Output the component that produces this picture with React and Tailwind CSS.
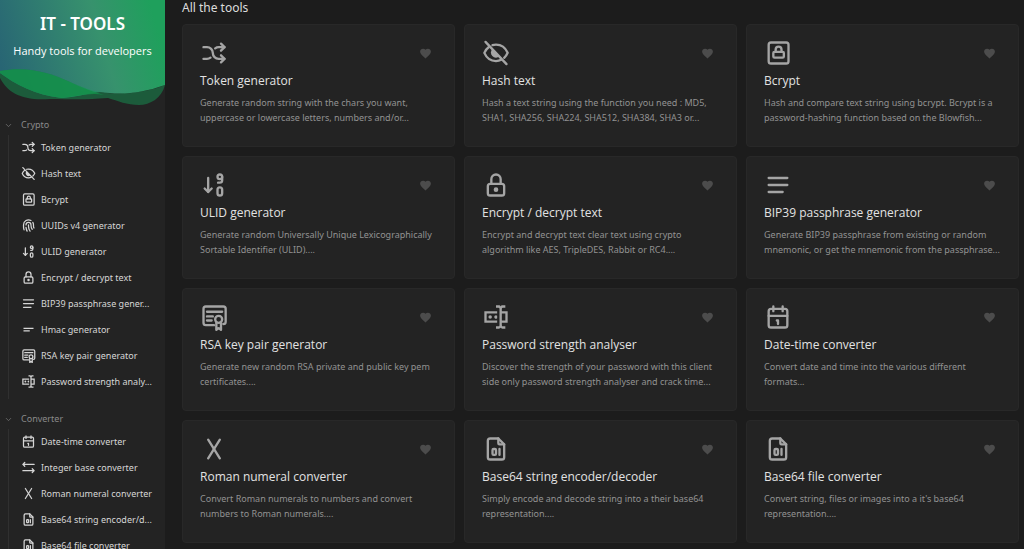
import { ChevronDownIcon } from "lucide-react";
import {
  TbArrowsShuffle,
  TbFileDigit,
  TbFingerprint,
  TbLetterX,
  TbLock,
  TbSortDescendingNumbers,
} from "react-icons/tb";
import { MdFavorite, MdShortText } from "react-icons/md";

function Stroke({ className, children }) {
  return (
    <svg
      viewBox="0 0 24 24"
      className={className}
      fill="none"
      stroke="currentColor"
      strokeWidth="2"
      strokeLinecap="round"
      strokeLinejoin="round"
      aria-hidden
    >
      {children}
    </svg>
  );
}

function EyeOffIcon({ className }) {
  return (
    <Stroke className={className}>
      <path d="M3 2.5l18 19" />
      <path d="M9 5.200c1-.3 2-.4 3-.4 4.800 0 8.200 2.900 10 7-.7 1.700-1.700 3.100-3 4.300M16.500 17.800c-1.300.7-2.800 1.100-4.500 1.100-4.800 0-8.200-2.900-10-7 .9-2 2.100-3.700 3.900-5" />
      <path d="M9 8.500a3.800 3.800 0 0 0 6 6.300z" fill="currentColor" stroke="none" />
    </Stroke>
  );
}

function LockSquareIcon({ className }) {
  return (
    <Stroke className={className}>
      <rect x="4" y="3" width="17" height="18" rx="2" />
      <rect x="8" y="11" width="9" height="5" rx="1" />
      <path d="M10 11V9a2.500 2.500 0 0 1 5 0v2" />
    </Stroke>
  );
}

function LinesIcon({ className }) {
  return (
    <Stroke className={className}>
      <path d="M4 6h16M4 12h16M4 18h12" />
    </Stroke>
  );
}

function CertificateIcon({ className }) {
  return (
    <Stroke className={className}>
      <path d="M12 19H5a2 2 0 0 1-2-2V5a2 2 0 0 1 2-2h15a2 2 0 0 1 2 2v11a2 2 0 0 1-2 2" />
      <path d="M6 7.500h13M6 11.500h5M6 15h4" />
      <circle cx="16" cy="14" r="3" />
      <path d="M14 17v6l2-1.500 2 1.500v-6" />
    </Stroke>
  );
}

function PasswordIcon({ className }) {
  return (
    <svg viewBox="0 0 24 24" className={className} fill="currentColor" aria-hidden>
      <path d="M17 7h5v10h-5v2a1 1 0 0 0 1 1h2v2h-2.500c-.55 0-1.500-.45-1.500-1 0 .55-.95 1-1.500 1H12v-2h2a1 1 0 0 0 1-1V5a1 1 0 0 0-1-1h-2V2h2.500c.55 0 1.500.45 1.500 1 0-.55.95-1 1.500-1H20v2h-2a1 1 0 0 0-1 1v2M2 7h11v2H4v6h9v2H2V7m18 8V9h-3v6h3M8.500 12a1.500 1.500 0 1 0-3 0 1.500 1.500 0 0 0 3 0M13 10.890a1.500 1.500 0 1 0 0 2.220v-2.220z" />
    </svg>
  );
}

function CalendarIcon({ className }) {
  return (
    <Stroke className={className}>
      <rect x="4" y="5" width="16" height="16" rx="2" />
      <path d="M16 3v4M8 3v4M4 11h16M11 15h1v3" />
    </Stroke>
  );
}

function SwapIcon({ className }) {
  return (
    <Stroke className={className}>
      <path d="M21 17H3M18 14l3 3-3 3M21 7H3M6 4L3 7l3 3" />
    </Stroke>
  );
}

const menu = [
  {
    label: "Crypto",
    items: [
      { name: "Token generator", icon: TbArrowsShuffle },
      { name: "Hash text", icon: EyeOffIcon },
      { name: "Bcrypt", icon: LockSquareIcon },
      { name: "UUIDs v4 generator", icon: TbFingerprint },
      { name: "ULID generator", icon: TbSortDescendingNumbers },
      { name: "Encrypt / decrypt text", icon: TbLock },
      { name: "BIP39 passphrase gener...", icon: LinesIcon },
      { name: "Hmac generator", icon: MdShortText },
      { name: "RSA key pair generator", icon: CertificateIcon },
      { name: "Password strength analy...", icon: PasswordIcon },
    ],
  },
  {
    label: "Converter",
    items: [
      { name: "Date-time converter", icon: CalendarIcon },
      { name: "Integer base converter", icon: SwapIcon },
      { name: "Roman numeral converter", icon: TbLetterX },
      { name: "Base64 string encoder/d...", icon: TbFileDigit },
      { name: "Base64 file converter", icon: TbFileDigit },
    ],
  },
];

const tools = [
  {
    name: "Token generator",
    icon: TbArrowsShuffle,
    lines: ["Generate random string with the chars you want,", "uppercase or lowercase letters, numbers and/or..."],
  },
  {
    name: "Hash text",
    icon: EyeOffIcon,
    lines: ["Hash a text string using the function you need : MD5,", "SHA1, SHA256, SHA224, SHA512, SHA384, SHA3 or..."],
  },
  {
    name: "Bcrypt",
    icon: LockSquareIcon,
    lines: ["Hash and compare text string using bcrypt. Bcrypt is a", "password-hashing function based on the Blowfish..."],
  },
  {
    name: "ULID generator",
    icon: TbSortDescendingNumbers,
    lines: ["Generate random Universally Unique Lexicographically", "Sortable Identifier (ULID)...."],
  },
  {
    name: "Encrypt / decrypt text",
    icon: TbLock,
    lines: ["Encrypt and decrypt text clear text using crypto", "algorithm like AES, TripleDES, Rabbit or RC4...."],
  },
  {
    name: "BIP39 passphrase generator",
    icon: LinesIcon,
    lines: ["Generate BIP39 passphrase from existing or random", "mnemonic, or get the mnemonic from the passphrase..."],
  },
  {
    name: "RSA key pair generator",
    icon: CertificateIcon,
    lines: ["Generate new random RSA private and public key pem", "certificates...."],
  },
  {
    name: "Password strength analyser",
    icon: PasswordIcon,
    lines: ["Discover the strength of your password with this client", "side only password strength analyser and crack time..."],
  },
  {
    name: "Date-time converter",
    icon: CalendarIcon,
    lines: ["Convert date and time into the various different", "formats..."],
  },
  {
    name: "Roman numeral converter",
    icon: TbLetterX,
    lines: ["Convert Roman numerals to numbers and convert", "numbers to Roman numerals...."],
  },
  {
    name: "Base64 string encoder/decoder",
    icon: TbFileDigit,
    lines: ["Simply encode and decode string into a their base64", "representation...."],
  },
  {
    name: "Base64 file converter",
    icon: TbFileDigit,
    lines: ["Convert string, files or images into a it's base64", "representation...."],
  },
];

function Hero() {
  return (
    <a href="#home" className="relative block h-[106px] shrink-0 text-center text-white">
      <svg viewBox="0 0 165 106" preserveAspectRatio="none" className="absolute inset-0 h-full w-full" aria-hidden>
        <defs>
          <linearGradient id="hero" gradientUnits="userSpaceOnUse" x1="0" y1="65" x2="155" y2="20">
            <stop offset="0%" stopColor="#286574" />
            <stop offset="65%" stopColor="#37926d" />
            <stop offset="100%" stopColor="#1fa05c" />
          </linearGradient>
        </defs>
        <path d="M0 0H165V85C140 94 120 95 100 92C85 94 75 97 62 98C35 95 15 84 0 73Z" fill="url(#hero)" />
        {/* two translucent waves under the gradient */}
        <path
          d="M0 71C28 66 50 73 70 82C83 88 94 92 104 95C90 92 75 97 62 98C35 95 15 84 0 73Z"
          fill="#14803c"
          fillOpacity="0.85"
        />
        <path
          d="M0 71C28 66 50 73 70 82C86 89 96 92 108 93C130 95 150 91 165 85C162 98 150 105 139 105C127 105 118 101 108 98C85 100 70 99 50 99C22 101 8 93 0 78Z"
          fill="#14a058"
          fillOpacity="0.45"
        />
      </svg>
      <div className="relative pt-3">
        <h1 className="text-[17px] leading-6 font-semibold">IT - TOOLS</h1>
        <p className="mt-[5px] font-['Open_Sans',sans-serif] text-[11px] leading-5">Handy tools for developers</p>
      </div>
    </a>
  );
}

function MenuGroup({ label, items }) {
  return (
    <section className="mb-[10px]">
      <button type="button" className="flex h-5 w-full items-center gap-2 pl-1 text-[9px] text-[#8a8a8a]">
        <ChevronDownIcon className="size-[9px] text-[#777]" aria-hidden />
        {label}
      </button>
      <ul className="ml-2 border-l border-[#303030] pb-1">
        {items.map((item) => (
          <li key={item.name}>
            <a href="#tool" className="flex h-[26px] items-center gap-[5px] pl-3 text-[9px] whitespace-nowrap text-[#d6d6d6]">
              <item.icon className="mb-[2px] size-[15px] shrink-0" />
              {item.name}
            </a>
          </li>
        ))}
      </ul>
    </section>
  );
}

function ToolCard({ tool }) {
  return (
    <article className="rounded-sm border border-[#282828] bg-[#232323] px-[17px] pt-[14px] pb-[21px]">
      <div className="flex items-center justify-between">
        <tool.icon className="size-7 text-[#a5a5a5]" />
        <button type="button" aria-label={`Add ${tool.name} to favorites`} className="mr-[5px] text-[#4c4c4c]">
          <MdFavorite className="size-[13px]" />
        </button>
      </div>
      <h3 className="mt-1 font-['Open_Sans',sans-serif] text-xs leading-5 text-[#e2e2e2]">
        <a href="#tool">{tool.name}</a>
      </h3>
      <p className="mt-1 text-[9px] leading-[15px] whitespace-nowrap text-[#929292]">
        {tool.lines[0]}
        <br />
        {tool.lines[1]}
      </p>
    </article>
  );
}

export default function App() {
  return (
    <div className="flex h-screen overflow-hidden bg-[#1c1c1c] font-['Noto_Sans',sans-serif]">
      <aside className="flex w-[165px] shrink-0 flex-col overflow-hidden bg-[#232323]">
        <Hero />
        <nav className="pt-[9px]">
          {menu.map((group) => (
            <MenuGroup key={group.label} label={group.label} items={group.items} />
          ))}
        </nav>
      </aside>
      <main className="min-w-0 flex-1 overflow-hidden pr-[5px] pl-[17px]">
        <h2 className="mb-2 text-xs leading-4 text-[#dcdcdc]">All the tools</h2>
        <div className="grid grid-cols-3 gap-[9px]">
          {tools.map((tool) => (
            <ToolCard key={tool.name} tool={tool} />
          ))}
        </div>
      </main>
    </div>
  );
}
